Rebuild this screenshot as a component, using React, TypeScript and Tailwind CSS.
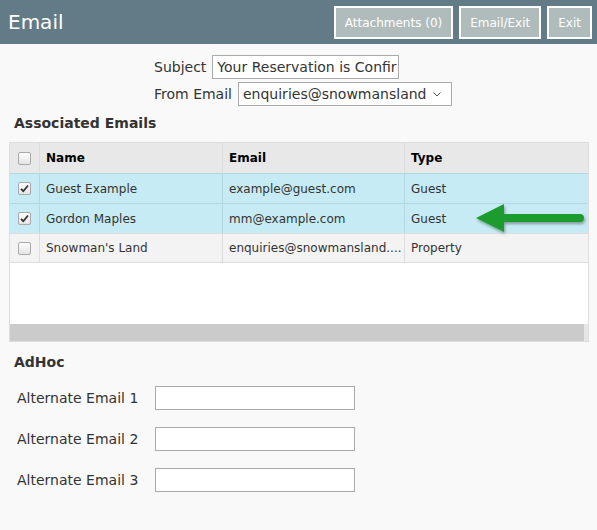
import React from "react";

const font = { fontFamily: '"DejaVu Sans", Verdana, sans-serif' };

function Check({ checked }: { checked?: boolean }) {
  return (
    <div className="w-[13px] h-[13px] border border-[#a9a9a9] rounded-[2px] bg-gradient-to-b from-[#fdfdfd] to-[#e4e4e4] flex items-center justify-center">
      {checked && (
        <svg width="9" height="9" viewBox="0 0 9 9">
          <path d="M1 4.8 L3.3 7.2 L8 1.5" stroke="#333" strokeWidth="1.8" fill="none" />
        </svg>
      )}
    </div>
  );
}

const rows = [
  { name: "Guest Example", email: "example@guest.com", type: "Guest", checked: true },
  { name: "Gordon Maples", email: "mm@example.com", type: "Guest", checked: true },
  { name: "Snowman's Land", email: "enquiries@snowmansland....", type: "Property", checked: false },
];

export default function App() {
  return (
    <div className="w-[597px] h-[530px] bg-[#f9f9f9] text-[#333] overflow-hidden relative" style={font}>
      <div className="h-[44px] bg-[#637a87] flex items-center justify-between pl-[8px] pr-[5px]">
        <div className="text-white text-[20px] leading-none">Email</div>
        <div className="flex gap-[6px] pt-[1px]">
          <button className="h-[33px] px-[9px] bg-[#b0bcbb] border-2 border-white text-white text-[12px]" style={font}>Attachments (0)</button>
          <button className="h-[33px] px-[9px] bg-[#b0bcbb] border-2 border-white text-white text-[12px]" style={font}>Email/Exit</button>
          <button className="h-[33px] px-[9px] bg-[#b0bcbb] border-2 border-white text-white text-[12px]" style={font}>Exit</button>
        </div>
      </div>

      <div className="flex flex-col items-start pl-[154px] pt-[11px] text-[14px]">
        <div className="flex items-center gap-[6px] h-[24px]">
          <span>Subject</span>
          <div className="w-[187px] h-[24px] border border-[#aaa] bg-white px-[4px] flex items-center overflow-hidden whitespace-nowrap">Your Reservation is Confir</div>
        </div>
        <div className="flex items-center gap-[6px] h-[24px] mt-[3px]">
          <span>From Email</span>
          <div className="w-[214px] h-[24px] border border-[#aaa] bg-white pl-[4px] pr-[10px] flex items-center justify-between whitespace-nowrap overflow-hidden">
            <span>enquiries@snowmansland</span>
            <svg width="8" height="5" viewBox="0 0 8 5"><path d="M0.5 0.5 L4 4 L7.5 0.5" stroke="#555" fill="none" /></svg>
          </div>
        </div>
      </div>

      <div className="pl-[14px] pt-[7px] font-bold text-[14px] text-[#333]">Associated Emails</div>

      <div className="mx-[9px] mt-[8px] w-[580px] border border-[#ddd] bg-white text-[12px]">
        <div className="grid grid-cols-[30px_183px_182px_1fr] h-[30px] bg-[#e8e8e8] font-bold text-black">
          <div className="flex items-center justify-center border-r border-[#ddd]"><Check /></div>
          <div className="flex items-center px-[6px] border-r border-[#ddd]">Name</div>
          <div className="flex items-center px-[6px] border-r border-[#ddd]">Email</div>
          <div className="flex items-center px-[6px]">Type</div>
        </div>
        {rows.map((r, i) => (
          <div
            key={i}
            className={`grid grid-cols-[30px_183px_182px_1fr] h-[30px] border-t ${r.checked ? "bg-[#c7ebf4] border-[#b4d8e2]" : "bg-[#f3f3f3] border-[#ddd] border-b"}`}
          >
            <div className={`flex items-center justify-center border-r ${r.checked ? "border-[#b4d8e2]" : "border-[#ddd]"}`}><Check checked={r.checked} /></div>
            <div className={`flex items-center px-[6px] border-r ${r.checked ? "border-[#b4d8e2]" : "border-[#ddd]"}`}>{r.name}</div>
            <div className={`flex items-center px-[6px] border-r whitespace-nowrap overflow-hidden ${r.checked ? "border-[#b4d8e2]" : "border-[#ddd]"}`}>{r.email}</div>
            <div className="flex items-center px-[6px]">{r.type}</div>
          </div>
        ))}
        <div className="h-[61px] bg-white" />
        <div className="h-[17px] bg-[#cbcbcb] flex justify-end"><div className="w-[4px] bg-[#e6e6e6]" /></div>
      </div>

      <div className="pl-[14px] pt-[10px] font-bold text-[14px]">AdHoc</div>

      <div className="flex flex-col gap-[17px] pl-[17px] pt-[13px] text-[14px]">
        {[1, 2, 3].map((n) => (
          <div key={n} className="flex items-center">
            <span className="w-[138px]">Alternate Email {n}</span>
            <div className="w-[200px] h-[24px] border border-[#aaa] bg-white" />
          </div>
        ))}
      </div>

      <svg className="absolute left-[470px] top-[198px]" width="122" height="44" viewBox="0 0 122 44">
        <defs>
          <filter id="sh" x="-20%" y="-30%" width="140%" height="170%">
            <feDropShadow dx="1" dy="2" stdDeviation="1.5" floodColor="#000" floodOpacity="0.35" />
          </filter>
        </defs>
        <g filter="url(#sh)">
          <path d="M6 20 L34 6 L34 16 L110 16 Q114 16 114 20 Q114 24 110 24 L34 24 L34 34 Z" fill="#1f9b2e" />
        </g>
      </svg>
    </div>
  );
}
